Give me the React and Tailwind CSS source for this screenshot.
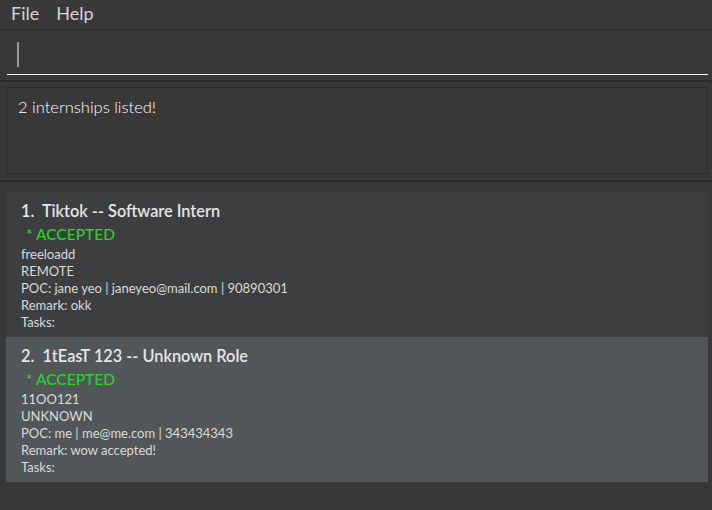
import React from "react";

const internships = [
  {
    index: 1,
    company: "Tiktok",
    role: "Software Intern",
    status: "* ACCEPTED",
    details: [
      "freeloadd",
      "REMOTE",
      "POC: jane yeo | janeyeo@mail.com | 90890301",
      "Remark: okk",
      "Tasks:",
    ],
  },
  {
    index: 2,
    company: "1tEasT 123",
    role: "Unknown Role",
    status: "* ACCEPTED",
    details: [
      "11OO121",
      "UNKNOWN",
      "POC: me | me@me.com | 343434343",
      "Remark: wow accepted!",
      "Tasks:",
    ],
  },
];

const App = () => {
  return (
    <div className="w-[712px] h-[510px] bg-[#383838] flex flex-col overflow-hidden font-['Lato','Liberation_Sans',sans-serif]">
      {/* menu bar */}
      <div className="h-[30px] flex items-center gap-[17px] px-[11px] pb-[3px] text-[18px] text-[#d4d4d4] border-b border-[#2b2b2b]">
        <span>File</span>
        <span>Help</span>
      </div>

      {/* command box */}
      <div className="h-[50px] px-[7px] pt-[12px]">
        <div className="ml-[10px] w-[2px] h-[25px] bg-[#9a9a9a]" />
        <div className="mt-[7px] w-[701px] h-px bg-white" />
      </div>
      <div className="h-[2px] bg-[#2b2b2b]" />

      {/* result display */}
      <div className="h-[98px] px-[6px] pt-[5px]">
        <div className="w-[702px] h-[87px] border border-[#2b2b2b] px-[11px] pt-[7px] text-[16.5px] leading-[24px] text-white font-light">
          2 internships listed!
        </div>
      </div>
      <div className="h-[2px] bg-[#2b2b2b]" />

      {/* internship list */}
      <div className="pt-[10px] px-[6px] flex flex-col">
        {internships.map((item) => (
          <div
            key={item.index}
            className={`w-[702px] h-[145px] px-[15px] pt-[8px] ${
              item.index % 2 === 1 ? "bg-[#3c3e3f]" : "bg-[#515658]"
            }`}
          >
            <div className="text-[16.3px] leading-[22px] font-semibold text-[#e6e6e6] whitespace-pre">
              {item.index}.{"  "}
              {item.company} -- {item.role}
            </div>
            <div className="pl-[5px] text-[15.5px] leading-[24px] font-medium text-[#22d822]">
              {item.status}
            </div>
            <div className="text-[13px] leading-[17px] text-[#dadada]">
              {item.details.map((line, i) => (
                <div key={i}>{line}</div>
              ))}
            </div>
          </div>
        ))}
      </div>
    </div>
  );
};

export default App;
